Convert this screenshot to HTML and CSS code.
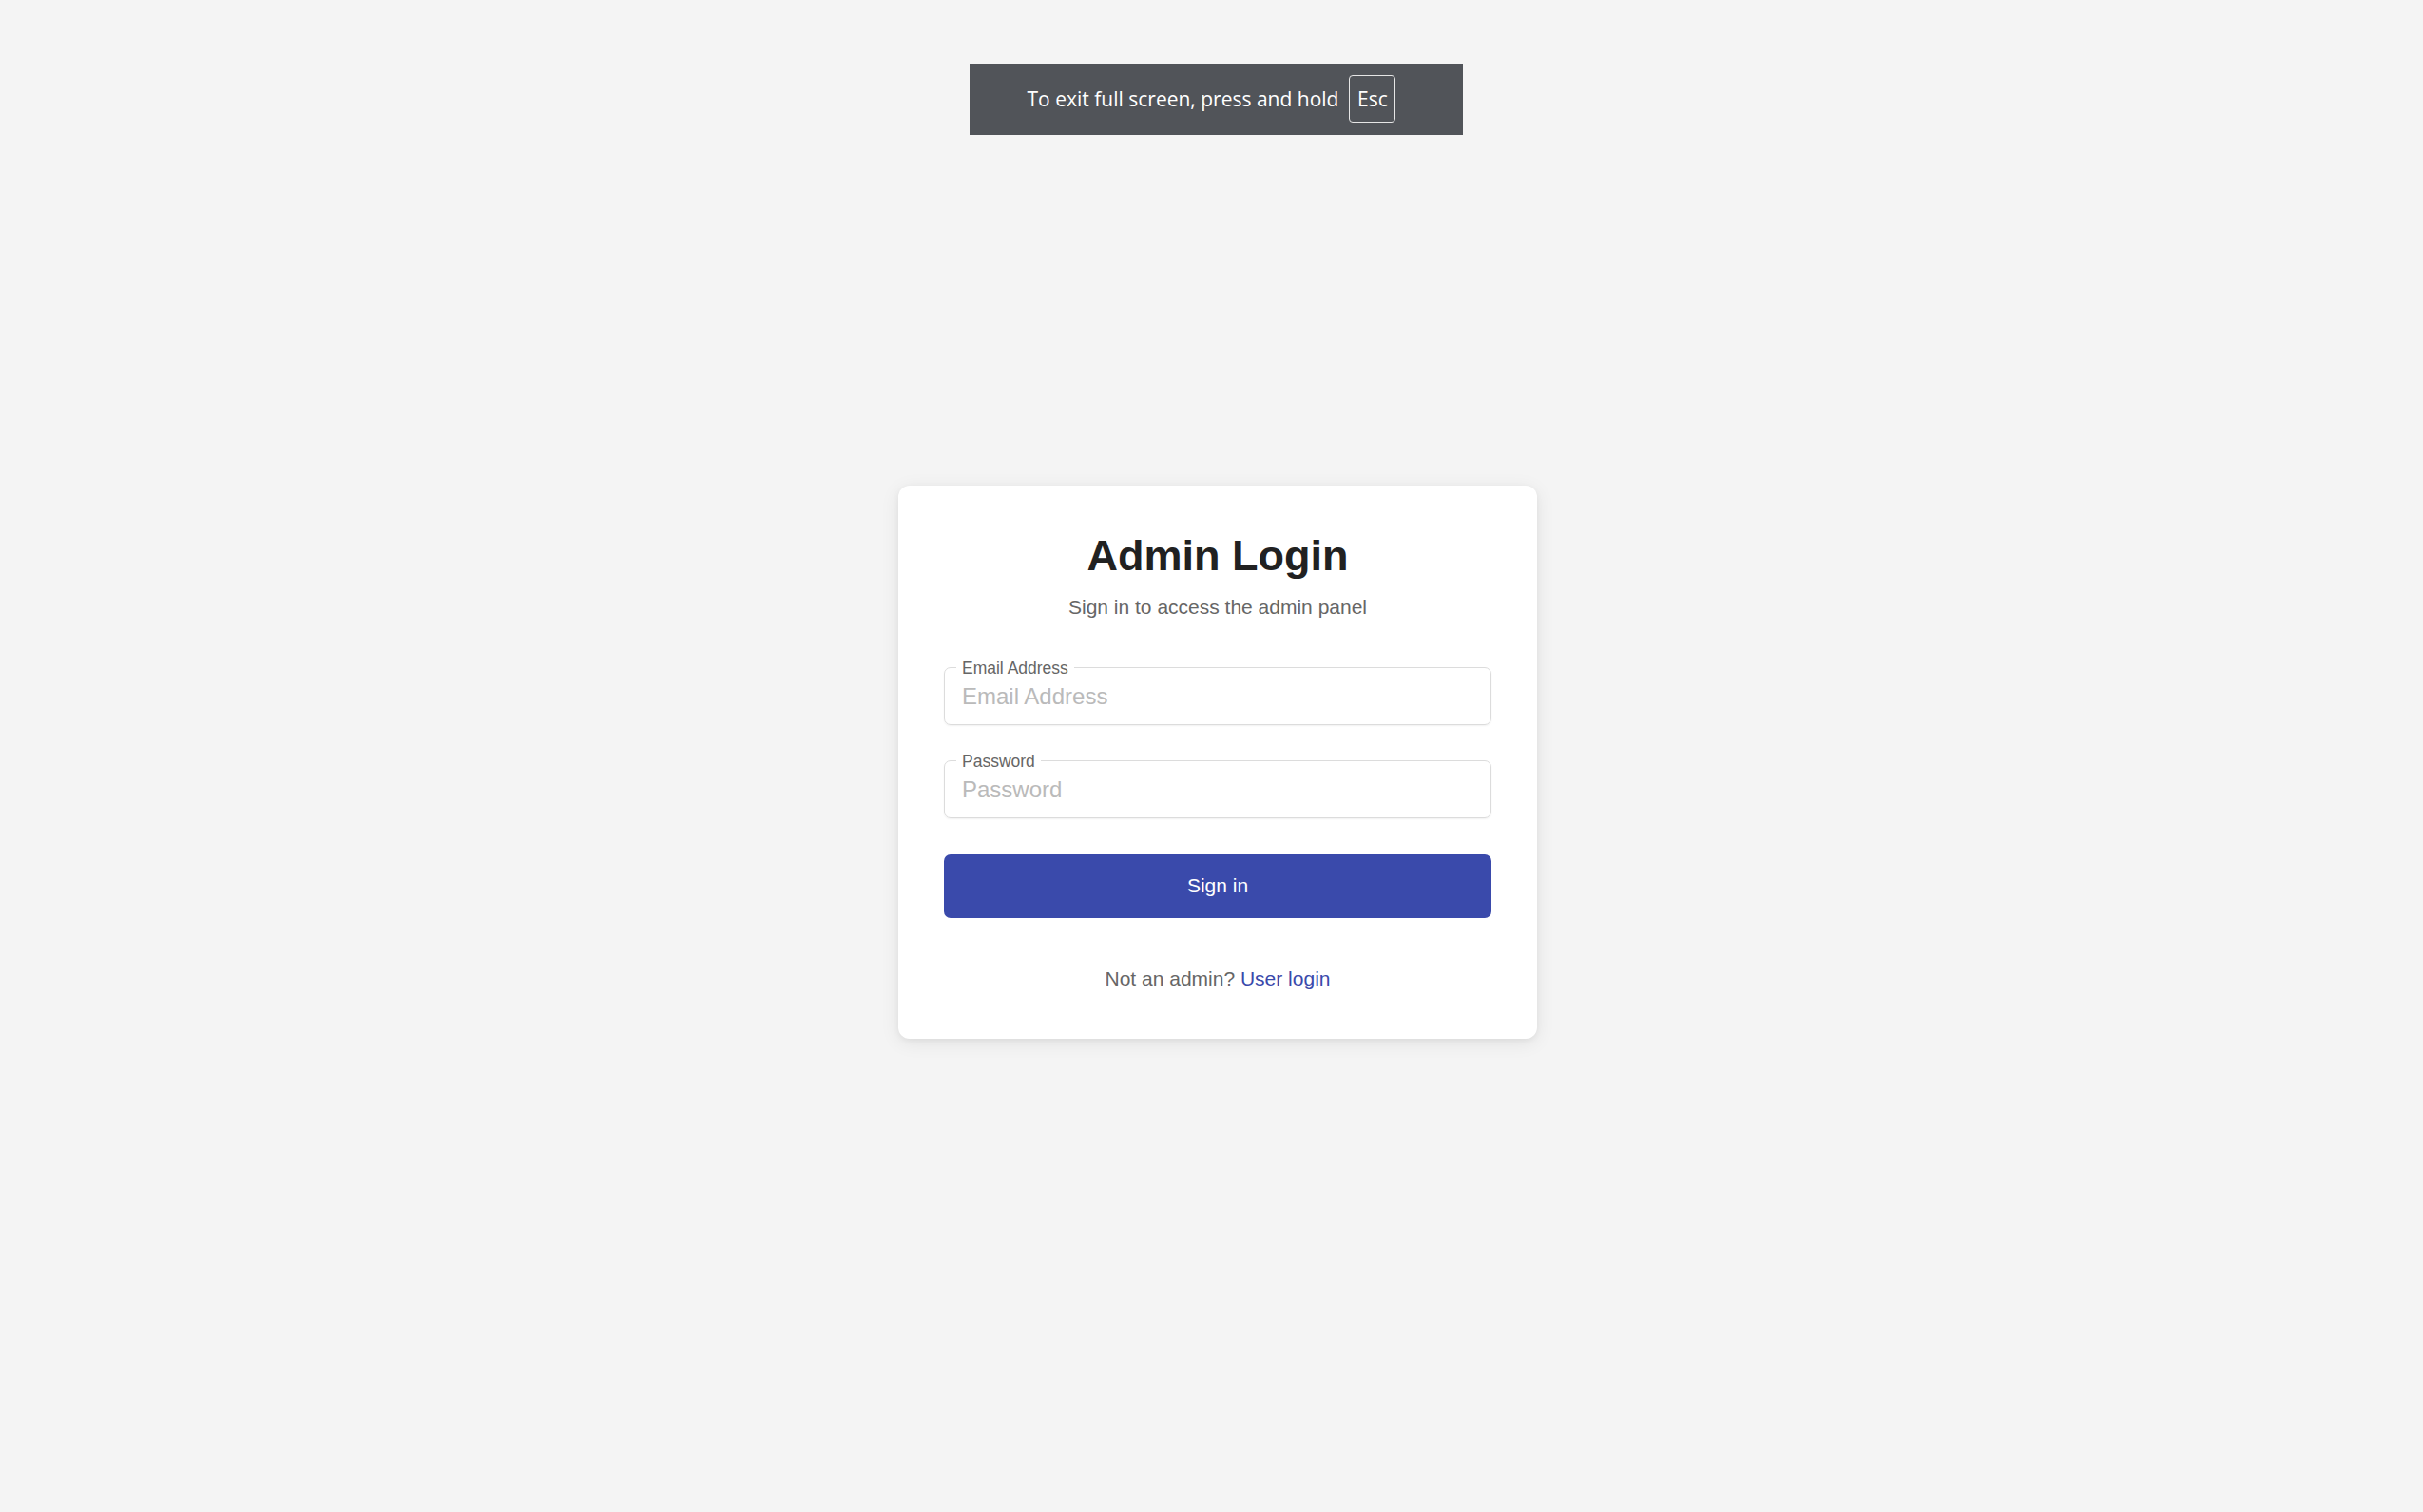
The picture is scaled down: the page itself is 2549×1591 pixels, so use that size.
FILE: index.html
```html
<!DOCTYPE html>
<html lang="en">
<head>
<meta charset="utf-8">
<title>Admin Login</title>
<link rel="stylesheet" href="styles.css">
</head>
<body>
<div class="fs-banner">
  <span class="fs-text">To exit full screen, press and hold</span>
  <span class="fs-key">Esc</span>
</div>
<main class="page">
  <section class="card">
    <h1 class="title">Admin Login</h1>
    <p class="subtitle">Sign in to access the admin panel</p>
    <form class="form">
      <div class="field">
        <fieldset class="outline"><legend class="legend">Email Address</legend></fieldset>
        <input class="input" type="email" placeholder="Email Address">
      </div>
      <div class="field">
        <fieldset class="outline"><legend class="legend">Password</legend></fieldset>
        <input class="input" type="password" placeholder="Password">
      </div>
      <button class="btn" type="button">Sign in</button>
    </form>
    <p class="footer">Not an admin? <a class="link" href="#">User login</a></p>
  </section>
</main>
</body>
</html>
```
FILE: styles.css
```css
* { box-sizing: border-box; }
html, body { margin: 0; padding: 0; }
body {
  background: #f4f4f4;
  font-family: "Liberation Sans", Arial, sans-serif;
  min-height: 100vh;
}
.fs-banner {
  position: absolute;
  top: 67px;
  left: 1020px;
  width: 519px;
  height: 75px;
  background: #515459;
  color: #ffffff;
  display: flex;
  align-items: center;
  justify-content: center;
  gap: 11px;
  font-family: "Open Sans", "Noto Sans", sans-serif;
  font-size: 21px;
  padding-right: 10px;
  padding-bottom: 2px;
  z-index: 10;
}
.fs-key {
  width: 49px;
  height: 50px;
  border: 1.5px solid #e6e6e6;
  border-radius: 4px;
  display: flex;
  align-items: center;
  justify-content: center;
}
.page {
  min-height: 100vh;
  display: flex;
  align-items: center;
  justify-content: center;
  padding: 13px 0 0 13px;
}
.card {
  width: 672px;
  background: #ffffff;
  border-radius: 12px;
  padding: 48px 48px 48px 48px;
  box-shadow: 0 4px 20px rgba(0,0,0,0.08), 0 2px 6px rgba(0,0,0,0.05);
  text-align: center;
}
.title {
  margin: 0;
  font-size: 45px;
  line-height: 51px;
  font-weight: 700;
  color: #212121;
}
.subtitle {
  margin: 13px 0 0 0;
  font-size: 21px;
  line-height: 31.5px;
  color: #666666;
}
.form {
  margin-top: 48px;
  display: flex;
  flex-direction: column;
}
.field {
  position: relative;
  height: 60px;
  margin-bottom: 38px;
}
.outline {
  position: absolute;
  top: -10px;
  left: 0;
  right: 0;
  bottom: 0;
  margin: 0;
  padding: 0 12px;
  border: 1px solid #dcdcdc;
  border-radius: 7px;
  box-shadow: 0 1px 2px rgba(0,0,0,0.06);
  text-align: left;
  pointer-events: none;
}
.legend {
  padding: 0 6px;
  font-size: 17.5px;
  line-height: 20px;
  color: #666666;
}
.input {
  position: relative;
  display: block;
  width: 100%;
  height: 60px;
  border: none;
  background: transparent;
  padding: 0 19px;
  font-family: "Liberation Sans", Arial, sans-serif;
  font-size: 24px;
  color: #212121;
  outline: none;
}
.input::placeholder { color: #bababa; }
.btn {
  margin-top: 0;
  height: 67px;
  border: none;
  border-radius: 7px;
  background: #3a4aab;
  color: #ffffff;
  font-family: "Liberation Sans", Arial, sans-serif;
  font-size: 21px;
  cursor: pointer;
}
.footer {
  margin: 48px 0 0 0;
  font-size: 21px;
  line-height: 31.5px;
  color: #666666;
}
.link {
  color: #3949ab;
  text-decoration: none;
}
```
